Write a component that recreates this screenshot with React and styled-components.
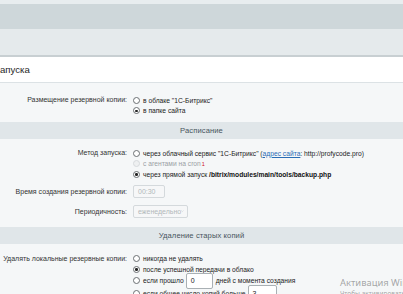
import React from 'react';
import styled, { createGlobalStyle } from 'styled-components';

const Global = createGlobalStyle`
  html, body { margin: 0; padding: 0; }
  body {
    width: 403px;
    height: 294px;
    overflow: hidden;
    background: #f5f7f8;
    font-family: "Liberation Sans", Arial, sans-serif;
    color: #2b2b2b;
  }
`;

const Page = styled.div`
  position: relative;
  width: 403px;
  height: 294px;
  overflow: hidden;
  background: #f5f7f8;
`;

const TopStrip = styled.div`
  height: 4px;
  background: #e8edef;
`;

const Toolbar = styled.div`
  height: 25px;
  background: #ced7da;
`;

const SubBar = styled.div`
  height: 26px;
  background: #e5eaec;
  border-bottom: 2px solid #c8cfd2;
`;

const TitleBar = styled.div`
  height: 25px;
  background: #ffffff;
  border-bottom: 1px solid #dce2e5;
  display: flex;
  align-items: center;
  font-size: 9.6px;
  color: #1f1f1f;
`;

const Form = styled.div`
  display: flex;
  flex-direction: column;
  padding-top: ${p => p.$top || 0}px;
`;

const Row = styled.div`
  display: grid;
  grid-template-columns: 127px 1fr;
  column-gap: 6px;
  margin-top: ${p => p.$mt || 0}px;
`;

const Label = styled.div`
  text-align: right;
  font-size: 7px;
  line-height: ${p => p.$lh || 10.5}px;
  color: #333;
  white-space: nowrap;
`;

const Options = styled.div`
  display: flex;
  flex-direction: column;
`;

const Option = styled.div`
  display: flex;
  align-items: center;
  height: ${p => p.$h || 10.5}px;
  font-size: 6.7px;
  color: ${p => (p.$disabled ? '#9aa0a4' : '#222')};
  white-space: nowrap;
`;

const Radio = styled.span`
  position: relative;
  flex: none;
  width: 7px;
  height: 7px;
  box-sizing: border-box;
  border-radius: 50%;
  border: 1px solid ${p => (p.$disabled ? '#d6dadc' : '#6b6f72')};
  background: ${p => (p.$disabled ? '#eef0f1' : '#fff')};
  margin-right: 3px;
  &::after {
    content: '';
    display: ${p => (p.$checked ? 'block' : 'none')};
    position: absolute;
    left: 1.25px;
    top: 1.25px;
    width: 2.5px;
    height: 2.5px;
    border-radius: 50%;
    background: #222;
  }
`;

const Link = styled.a`
  color: #2a6db5;
  text-decoration: underline;
`;

const Sup = styled.sup`
  color: #d0141b;
  font-size: 5.5px;
  line-height: 0;
  vertical-align: 3px;
  margin-left: 1px;
`;

const Bold = styled.b`
  font-weight: bold;
  color: #111;
`;

const SectionHeader = styled.div`
  height: 17px;
  margin-top: ${p => p.$mt || 0}px;
  background: #e0e6e9;
  display: flex;
  align-items: center;
  justify-content: center;
  font-size: 7.6px;
  font-weight: 500;
  color: #47545c;
  letter-spacing: 0.1px;
`;

const FieldBox = styled.div`
  box-sizing: border-box;
  width: ${p => p.$w}px;
  height: ${p => p.$h || 13}px;
  border: 1px solid ${p => (p.$disabled ? '#d4d9dc' : '#a9b0b4')};
  border-radius: 2px;
  background: ${p => (p.$disabled ? '#f6f7f8' : '#ffffff')};
  color: ${p => (p.$disabled ? '#b2b7ba' : '#222')};
  font-size: 7px;
  display: flex;
  align-items: center;
  justify-content: space-between;
  padding: 0 3px 0 4px;
  margin: 0 ${p => p.$mr || 0}px 0 ${p => p.$ml || 0}px;
  flex: none;
`;

const Chevron = () => (
  <svg width="6" height="4" viewBox="0 0 6 4">
    <path d="M0.5 0.8 L3 3.2 L5.5 0.8" fill="none" stroke="#b3b8bb" strokeWidth="0.8" />
  </svg>
);

const Watermark = styled.div`
  position: absolute;
  left: 340px;
  top: 277px;
  font-family: "Noto Sans", "Liberation Sans", sans-serif;
  font-size: 9.4px;
  color: rgba(120, 120, 120, 0.65);
  white-space: nowrap;
  line-height: 12px;
`;

const WatermarkSub = styled.div`
  font-size: 6.5px;
  line-height: 9px;
`;

export default function App() {
  return (
    <Page>
      <Global />
      <TopStrip />
      <Toolbar />
      <SubBar />
      <TitleBar>апуска</TitleBar>
      <Form $top={12}>
        <Row>
          <Label>Размещение резервной копии:</Label>
          <Options>
            <Option><Radio />в облаке "1С-Битрикс"</Option>
            <Option><Radio $checked />в папке сайта</Option>
          </Options>
        </Row>
        <SectionHeader $mt={6}>Расписание</SectionHeader>
        <Row $mt={9}>
          <Label>Метод запуска:</Label>
          <Options>
            <Option>
              <Radio />через облачный сервис "1С-Битрикс" (<Link>адрес сайта</Link>: http://profycode.pro)
            </Option>
            <Option $disabled><Radio $disabled />с агентами на cron<Sup>1</Sup></Option>
            <Option>
              <Radio $checked />через прямой запуск&nbsp;<Bold>/bitrix/modules/main/tools/backup.php</Bold>
            </Option>
          </Options>
        </Row>
        <Row $mt={5}>
          <Label $lh={13}>Время создания резервной копии:</Label>
          <Options>
            <FieldBox $w={32} $disabled>00:30</FieldBox>
          </Options>
        </Row>
        <Row $mt={7}>
          <Label $lh={13}>Периодичность:</Label>
          <Options>
            <FieldBox $w={55} $disabled>еженедельно<Chevron /></FieldBox>
          </Options>
        </Row>
        <SectionHeader $mt={9}>Удаление старых копий</SectionHeader>
        <Row $mt={10}>
          <Label>Удалять локальные резервные копии:</Label>
          <Options>
            <Option><Radio />никогда не удалять</Option>
            <Option><Radio $checked />после успешной передачи в облако</Option>
            <Option $h={12}>
              <Radio />если прошло<FieldBox $w={27} $h={16} $ml={2} $mr={3}>0</FieldBox>дней с момента создания
            </Option>
            <Option $h={13}>
              <Radio />если общее число копий больше<FieldBox $w={29} $h={16} $ml={2}>3</FieldBox>
            </Option>
          </Options>
        </Row>
      </Form>
      <Watermark>
        Активация Windows
        <WatermarkSub>Чтобы активировать Windows, перейдите в раздел "Параметры".</WatermarkSub>
      </Watermark>
    </Page>
  );
}
